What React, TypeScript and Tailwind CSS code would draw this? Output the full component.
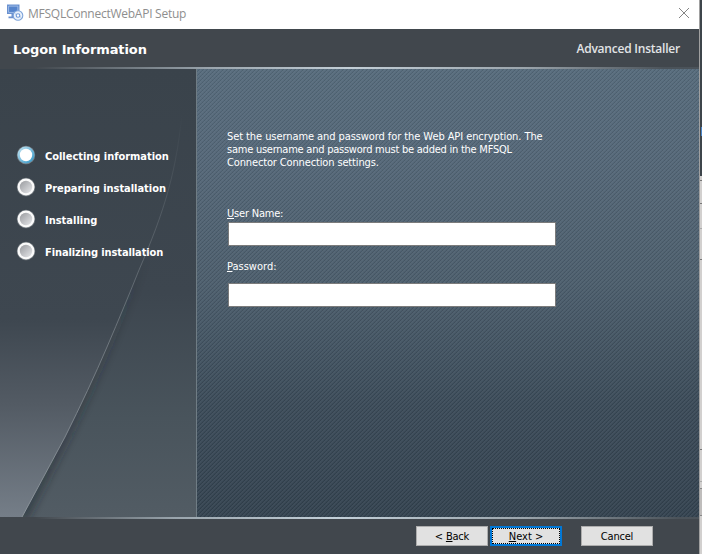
import React from "react";

const sans = "font-['DejaVu_Sans_Condensed','DejaVu_Sans',sans-serif] [font-stretch:condensed]";

const steps = [
  { label: "Collecting information", active: true, spacing: "tracking-[-0.03px]" },
  { label: "Preparing installation", active: false, spacing: "tracking-[-0.03px]" },
  { label: "Installing", active: false, spacing: "tracking-normal" },
  { label: "Finalizing installation", active: false, spacing: "tracking-[-0.1px]" },
];

function SetupIcon() {
  return (
    <svg width="18" height="18" viewBox="0 0 18 18" className="block" fill="none">
      <rect x=".5" y="1" width="11.5" height="8.5" fill="#5584cc" stroke="#6b91cf" />
      <path d="M1.6 2.1h9.3v6.3H1.6z" stroke="#b4cbee" strokeWidth=".8" />
      <path d="M4.5 10v2.4H1.5v1.8H9v-1.8H7V10" fill="#6b91cf" />
      <circle cx="11" cy="11.5" r="4.8" fill="#e9f1fb" stroke="#7da3da" strokeWidth="1.1" />
      <circle cx="11" cy="11.5" r="1.8" fill="#fff" stroke="#6c97d8" strokeWidth="1.1" />
      <path d="M8 9.8l1.2.6M13 12.6l1.3.8" stroke="#a9c3e9" />
    </svg>
  );
}

function StepDot({ active }: { active: boolean }) {
  return (
    <svg width="20" height="20" viewBox="0 0 20 20" className="block">
      <defs>
        <linearGradient id="ring" x1="0" y1="0" x2="1" y2="1">
          <stop offset="0" stopColor="#c5e6f4" />
          <stop offset="1" stopColor="#2e93c4" />
        </linearGradient>
        <linearGradient id="dot" x1="0" y1="0" x2="1" y2="1">
          <stop offset="0" stopColor="#989a9e" />
          <stop offset="1" stopColor="#e7e8eb" />
        </linearGradient>
      </defs>
      <circle cx="10" cy="10" r="9.2" fill="#777e84" />
      <circle cx="10" cy="10" r="8.5" fill={active ? "url(#ring)" : "#fafafa"} />
      <circle cx="10" cy="10" r="6.2" fill={active ? "#fff" : "url(#dot)"} />
    </svg>
  );
}

function SidebarArt() {
  return (
    <svg width="196" height="448" viewBox="0 69 196 448" className="absolute inset-0">
      <defs>
        <linearGradient id="side" x1="0" y1="69" x2="0" y2="517" gradientUnits="userSpaceOnUse">
          <stop offset="0" stopColor="#3a434b" />
          <stop offset=".5" stopColor="#3d464f" />
          <stop offset=".78" stopColor="#49545c" />
          <stop offset="1" stopColor="#525c64" />
        </linearGradient>
        <linearGradient id="sweep" x1="0" y1="69" x2="0" y2="517" gradientUnits="userSpaceOnUse">
          <stop offset="0" stopColor="#3a434b" />
          <stop offset=".56" stopColor="#3e4750" />
          <stop offset=".75" stopColor="#535b64" />
          <stop offset="1" stopColor="#757e88" />
        </linearGradient>
        <linearGradient id="edge" x1="0" y1="115" x2="0" y2="517" gradientUnits="userSpaceOnUse">
          <stop offset="0" stopColor="#737b82" stopOpacity="0" />
          <stop offset=".5" stopColor="#747c83" stopOpacity=".8" />
          <stop offset="1" stopColor="#8c949b" />
        </linearGradient>
        <linearGradient id="shade" x1="0" y1="250" x2="0" y2="517" gradientUnits="userSpaceOnUse">
          <stop offset="0" stopColor="#20262d" stopOpacity="0" />
          <stop offset="1" stopColor="#20262d" stopOpacity=".6" />
        </linearGradient>
        <filter id="soft" x="-20%" y="-20%" width="140%" height="140%">
          <feGaussianBlur stdDeviation="4" />
        </filter>
      </defs>
      <rect y="69" width="196" height="448" fill="url(#side)" />
      <path d="M183 100C178 170 164 212 139 270Q125 305 107 347T65 437L22 519" fill="none" stroke="url(#shade)" strokeWidth="9" filter="url(#soft)" />
      <path d="M0 69H184C182 160 164 212 139 270Q125 305 107 347T65 437L22 517H0z" fill="url(#sweep)" />
      <path d="M183 100C178 170 164 212 139 270Q125 305 107 347T65 437L22 517" fill="none" stroke="url(#edge)" />
    </svg>
  );
}

export default function App() {
  return (
    <div className={`flex h-[554px] w-[702px] overflow-hidden bg-[#41484e] text-[11px] ${sans}`}>
      <div className="flex w-[699px] flex-col">
        <div className="flex h-[29px] shrink-0 items-center bg-white pl-[7px] [font-stretch:normal]">
          <div className="mb-[3px]"><SetupIcon /></div>
          <span className="mb-[2px] ml-[3px] whitespace-nowrap font-['Open_Sans',sans-serif] text-[12px] leading-4 tracking-[-0.25px] text-[#8e8e8e]">
            MFSQLConnectWebAPI Setup
          </span>
          <svg width="12" height="12" viewBox="0 0 12 12" className="mr-[9px] mb-[3px] ml-auto">
            <path d="M1 1l10 10M11 1L1 11" stroke="#858585" />
          </svg>
        </div>

        <div className="flex h-[38px] shrink-0 items-center justify-between bg-[#41474d] pr-[19px] pl-[13px] [font-stretch:normal]">
          <h1 className="mt-[3px] whitespace-nowrap font-['DejaVu_Sans',sans-serif] text-[13px] leading-4 font-bold tracking-[-0.1px] text-white">
            Logon Information
          </h1>
          <span className="mt-[2px] whitespace-nowrap font-['Open_Sans',sans-serif] text-[12px] leading-4 font-semibold tracking-[-0.22px] text-[#e1e4e6]">
            Advanced Installer
          </span>
        </div>
        <div className="h-[2px] shrink-0 bg-[linear-gradient(90deg,#41474d_5%,#9aa5ad_30%,#c3cfd7_50%,#9ba5ac_75%,#4b535a_95%)]" />

        <div className="flex h-[448px] shrink-0">
          <aside className="relative w-[196px] shrink-0">
            <SidebarArt />
            <ul className="relative flex flex-col gap-3 pt-[76px] pl-4">
              {steps.map((s) => (
                <li key={s.label} className="flex h-5 items-center gap-[9px]">
                  <StepDot active={s.active} />
                  <span className={`mt-1 whitespace-nowrap leading-4 font-bold text-white ${s.spacing}`}>{s.label}</span>
                </li>
              ))}
            </ul>
          </aside>
          <main className="flex-1 border-l border-[#6f7c84] bg-[repeating-linear-gradient(45deg,rgba(0,0,0,0.035)_0px,transparent_1.414px,transparent_2.828px),repeating-linear-gradient(135deg,rgba(255,255,255,0.05)_0px,rgba(255,255,255,0.05)_1px,transparent_1.6px,rgba(0,0,0,0.08)_2.2px,transparent_2.828px),linear-gradient(180deg,#566b7c_0%,#546778_20%,#4c5e6d_48%,#3b4b59_75%,#344350_100%)] pt-[61px] pl-[30px] text-white">
            <p className="whitespace-nowrap leading-[13px] tracking-[-0.08px]">
              Set the username and password for the Web API encryption. The
              <br />
              <span className="tracking-[-0.24px]">same username and password must be added in the MFSQL</span>
              <br />
              <span className="tracking-[-0.14px]">Connector Connection settings.</span>
            </p>
            <label htmlFor="user" className="mt-[38px] block leading-[13px] tracking-[-0.2px]"><u>U</u>ser Name:</label>
            <input id="user" className="mt-[2px] ml-px block h-6 w-[328px] border border-[#7b7b7b] bg-white outline-none" />
            <label htmlFor="password" className="mt-[14px] block leading-[13px]"><u>P</u>assword:</label>
            <input id="password" type="password" className="mt-[10px] ml-px block h-6 w-[328px] border border-[#7b7b7b] bg-white outline-none" />
          </main>
        </div>
        <div className="h-[2px] shrink-0 bg-[linear-gradient(90deg,#41474d_5%,#9aa5ad_25%,#c3d0d9_48%,#9ba5ac_75%,#4b535a_97%)]" />

        <div className="flex h-[35px] shrink-0 items-start bg-[#41474d] pt-[7px] pl-[416px] text-[11px] text-black">
          <button className="h-5 w-[72px] border border-[#adadad] bg-[#e1e1e1] pt-px leading-[18px] tracking-[-0.2px]">&lt; <u>B</u>ack</button>
          <button className="ml-[2px] h-5 w-[72px] border-2 border-[#0078d7] bg-[#e1e1e1]">
            <span className="block h-4 border border-dotted border-black leading-[15px]"><u>N</u>ext &gt;</span>
          </button>
          <button className="ml-[19px] h-5 w-[72px] border border-[#adadad] bg-[#e1e1e1] pt-px leading-[18px] tracking-[-0.2px]">Cancel</button>
        </div>
      </div>

      <div className="flex w-[3px] flex-col border-l border-[#a0a0a0] bg-[#d2d0cf]">
        <div className="flex h-[176px] shrink-0 flex-col bg-[#3e454b] pt-[127px]">
          <div className="ml-px h-[9px] bg-[#4a85c9]" />
        </div>
        <div className="h-[5px] border-b border-[#777]" />
        <div className="h-[23px] border-b border-[#777]" />
        <div className="h-[25px] border-b border-[#aaa]" />
        <div className="h-[31px] border-b border-[#777]" />
        <div className="h-[190px] border-b border-[#777]" />
        <div className="h-[32px] border-b border-[#aaa]" />
        <div className="h-[7px] border-b border-[#888]" />
        <div className="h-[27px] border-b border-[#888] bg-[#bfbdbc]" />
      </div>
    </div>
  );
}
